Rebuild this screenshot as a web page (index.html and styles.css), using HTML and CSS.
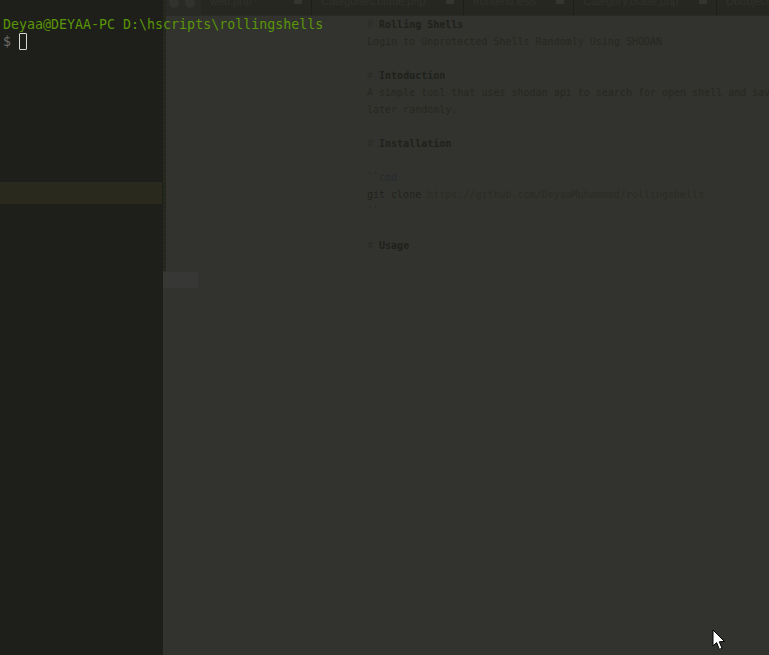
FILE: index.html
```html
<!DOCTYPE html>
<html lang="en">
<head>
<meta charset="utf-8">
<title>Terminal over editor</title>
<link rel="stylesheet" href="styles.css">
</head>
<body>
<div class="desktop">
  <aside class="sidebar">
    <div class="sidebar-gap"></div>
    <div class="sidebar-row"></div>
  </aside>
  <div class="handle">
    <div class="handle-strip"></div>
    <div class="minimap-thumb"></div>
  </div>
  <main class="editor">
    <div class="tabs">
      <div class="tab-arrows"><span class="arrow"></span><span class="arrow"></span></div>
      <div class="tab tab-1"><span class="tab-name">web.php</span><span class="tab-x"></span></div>
      <div class="tab tab-2"><span class="tab-name">Categories.blade.php</span><span class="tab-x"></span></div>
      <div class="tab tab-3"><span class="tab-name">frontend.less</span><span class="tab-x"></span></div>
      <div class="tab tab-4"><span class="tab-name">Category.blade.php</span><span class="tab-x"></span></div>
      <div class="tab tab-5"><span class="tab-name">Dbobject</span></div>
    </div>
    <div class="doc">
<div class="ln"><span class="hash"># </span><b>Rolling Shells</b></div>
<div class="ln">Login to Unprotected Shells Randomly Using SHODAN</div>
<div class="ln">&nbsp;</div>
<div class="ln"><span class="hash"># </span><b>Intoduction</b></div>
<div class="ln">A simple tool that uses shodan api to search for open shell and save them to use</div>
<div class="ln">later randomly.</div>
<div class="ln">&nbsp;</div>
<div class="ln"><span class="hash"># </span><b>Installation</b></div>
<div class="ln">&nbsp;</div>
<div class="ln"><span class="tick">``</span><span class="cmd">cmd</span></div>
<div class="ln"><span class="git">git clone </span><span class="url">https://github.com/DeyaaMuhammad/rollingshells</span></div>
<div class="ln"><span class="tick">``</span></div>
<div class="ln">&nbsp;</div>
<div class="ln"><span class="hash"># </span><b>Usage</b></div>
    </div>
  </main>
  <div class="terminal">
    <div class="prompt">Deyaa@DEYAA-PC D:\hscripts\rollingshells</div>
    <div class="input"><span class="dollar">$</span><span class="cursor"></span></div>
  </div>
  <svg class="pointer" width="14" height="22" viewBox="0 0 14 22" aria-hidden="true"><path d="M1 1V17L4.6 13.6L7.4 20.4L10 19.2L7.3 12.8L12.4 12.4Z" fill="#fff" stroke="#000" stroke-width="1"/></svg>
</div>
</body>
</html>
```
FILE: styles.css
```css
html, body { margin: 0; padding: 0; background: #32332e; }
.desktop { position: relative; display: flex; width: 769px; height: 655px; overflow: hidden; background: #32332e; }
.sidebar { width: 163px; flex: none; background: #1e1f1a; }
.sidebar-gap { height: 182px; }
.sidebar-row { height: 22px; width: 162px; background: #2a291e; }
.handle { width: 3px; flex: none; display: flex; flex-direction: column; background: #32332e; }
.handle-strip { height: 271px; background: repeating-linear-gradient(180deg, #262a1e 0, #262a1e 2px, #22261c 2px, #22261c 4px); }
.minimap-thumb { position: absolute; left: 163px; top: 272px; width: 35px; height: 16px; background: #373835; }
.editor { flex: 1; min-width: 0; display: flex; flex-direction: column; }
.tabs { height: 15px; flex: none; display: flex; background: #262721; overflow: hidden; border-bottom: 1px solid #292a24; font: 11px/9px "Liberation Sans", sans-serif; color: #30312b; }
.tab-arrows { width: 35px; flex: none; display: flex; gap: 6px; padding-left: 3px; box-sizing: border-box; background: #292a25; }
.arrow { width: 10px; height: 8px; border-radius: 0 0 5px 5px; background: #31322d; }
.tab { flex: none; display: flex; justify-content: space-between; box-sizing: border-box; border-right: 1px solid #1e1f1a; white-space: nowrap; padding-left: 9px; padding-right: 9px; }
.tab-name { position: relative; top: -3px; }
.tab-x { width: 8px; height: 4px; background: #34352f; border-radius: 0 0 1px 1px; }
.tab-1 { width: 111px; }
.tab-2 { width: 152px; }
.tab-3 { width: 110px; }
.tab-4 { width: 143px; }
.tab-5 { width: 60px; border-right: 0; }
.doc { padding: 0 0 0 201px; font: 10px/17px "DejaVu Sans Mono", monospace; color: #262722; white-space: nowrap; }
.ln { height: 17px; }
.ln b { color: #20211c; font-weight: bold; }
.hash { color: #2b2c27; }
.tick { color: #24251f; }
.cmd { color: #262a2e; }
.git { color: #21221d; }
.url { color: #2a2b25; }
.terminal { position: absolute; left: 3px; top: 17px; font: 13.3px/16px "DejaVu Sans Mono", monospace; color: #5a9608; }
.prompt { white-space: pre; }
.input { display: flex; align-items: center; height: 17px; }
.dollar { color: #6a6a6a; width: 16px; }
.cursor { width: 6px; height: 15px; border: 1px solid #d8d8d8; border-radius: 1px; }
.pointer { position: absolute; left: 712px; top: 629px; }
```
